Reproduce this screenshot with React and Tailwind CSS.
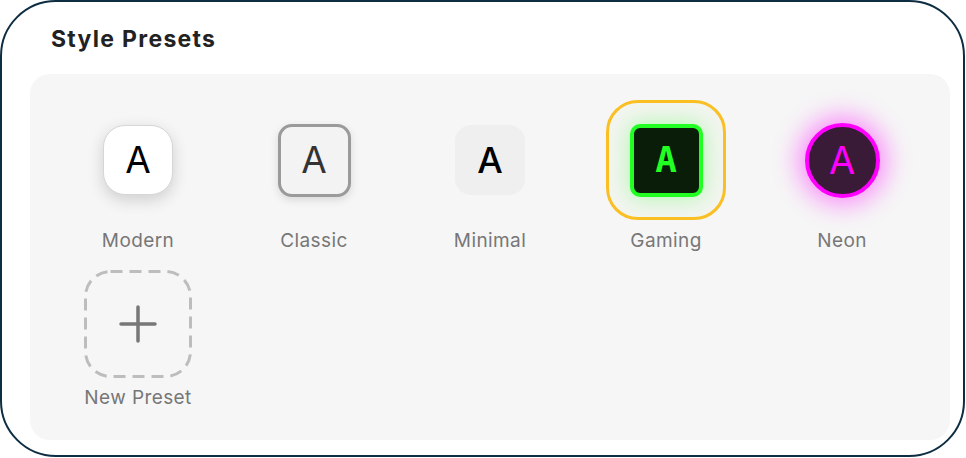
import { useState } from "react";

const PRESETS = [
  { id: "modern", label: "Modern" },
  { id: "classic", label: "Classic" },
  { id: "minimal", label: "Minimal" },
  { id: "gaming", label: "Gaming" },
  { id: "neon", label: "Neon" },
];

function PresetIcon({ id }) {
  if (id === "modern") {
    return (
      <div className="flex h-[70px] w-[70px] items-center justify-center rounded-[22px] border border-[#d6d6d6] bg-white text-[37px] text-black shadow-[0_5px_16px_rgba(0,0,0,0.16)]">
        A
      </div>
    );
  }
  if (id === "classic") {
    return (
      <div className="flex h-[73px] w-[73px] items-center justify-center rounded-[14px] border-[3px] border-[#9a9a9a] bg-[#f3f3f3] text-[37px] text-[#333] shadow-[0_3px_8px_rgba(0,0,0,0.12)]">
        A
      </div>
    );
  }
  if (id === "minimal") {
    return (
      <div className="flex h-[70px] w-[70px] items-center justify-center rounded-[16px] bg-[#efefef] text-[36px] font-medium text-black">
        A
      </div>
    );
  }
  if (id === "gaming") {
    return (
      <div className="flex h-[73px] w-[73px] items-center justify-center rounded-[10px] border-4 border-[#22ff22] bg-[#0a1d09] text-[36px] font-bold text-[#22ff22] shadow-[0_0_22px_rgba(34,255,34,0.35)] [font-family:'DejaVu_Sans_Mono',monospace]">
        A
      </div>
    );
  }
  return (
    <div className="flex h-[75px] w-[75px] items-center justify-center rounded-full border-4 border-[#ff00ff] bg-[#3a1b37] text-[38px] text-[#ff00ff] shadow-[0_0_26px_6px_rgba(255,0,255,0.45)]">
      A
    </div>
  );
}

export default function App() {
  const [selected, setSelected] = useState("gaming");

  return (
    <div className="h-[458px] w-[966px] bg-white [font-family:Inter,'Noto_Sans',sans-serif]">
      <div className="flex h-[457px] w-[965px] flex-col rounded-[56px] border-2 border-[#0d2d42] bg-white px-[28px] pt-[23px]">
        <h2 className="ml-[21px] text-[23px] leading-[28px] font-bold tracking-[1.3px] text-[#222]">
          Style Presets
        </h2>

        <div className="mt-[21px] h-[366px] w-[920px] rounded-[20px] bg-[#f6f6f6] px-5 pt-[26px]">
          <div className="grid grid-cols-[repeat(5,176px)]">
            {PRESETS.map((p) => (
              <button
                key={p.id}
                onClick={() => setSelected(p.id)}
                className="flex flex-col items-center"
              >
                <div
                  className={
                    selected === p.id
                      ? "flex h-[120px] w-[120px] items-center justify-center rounded-[32px] border-[3px] border-[#fbbf24] bg-[#f3f5f0]"
                      : "flex h-[120px] w-[120px] items-center justify-center"
                  }
                >
                  <PresetIcon id={p.id} />
                </div>
                <span className="mt-[9px] text-[19px] leading-6 tracking-[0.4px] text-[#777]">
                  {p.label}
                </span>
              </button>
            ))}
          </div>

          <div className="mt-[17px] grid grid-cols-[repeat(5,176px)]">
            <button className="flex flex-col items-center">
              <div className="relative flex h-[108px] w-[108px] items-center justify-center">
                <svg
                  className="absolute inset-0"
                  width="108"
                  height="108"
                  viewBox="0 0 108 108"
                  fill="none"
                >
                  <rect
                    x="1.5"
                    y="1.5"
                    width="105"
                    height="105"
                    rx="25"
                    stroke="#bdbdbd"
                    strokeWidth="3"
                    strokeDasharray="12 7"
                  />
                </svg>
                <svg width="38" height="38" viewBox="0 0 38 38" fill="none">
                  <path
                    d="M19 2v34M2 19h34"
                    stroke="#777"
                    strokeWidth="3.5"
                    strokeLinecap="round"
                  />
                </svg>
              </div>
              <span className="mt-[8px] text-[19px] leading-6 tracking-[0.4px] text-[#777]">
                New Preset
              </span>
            </button>
          </div>
        </div>
      </div>
    </div>
  );
}
